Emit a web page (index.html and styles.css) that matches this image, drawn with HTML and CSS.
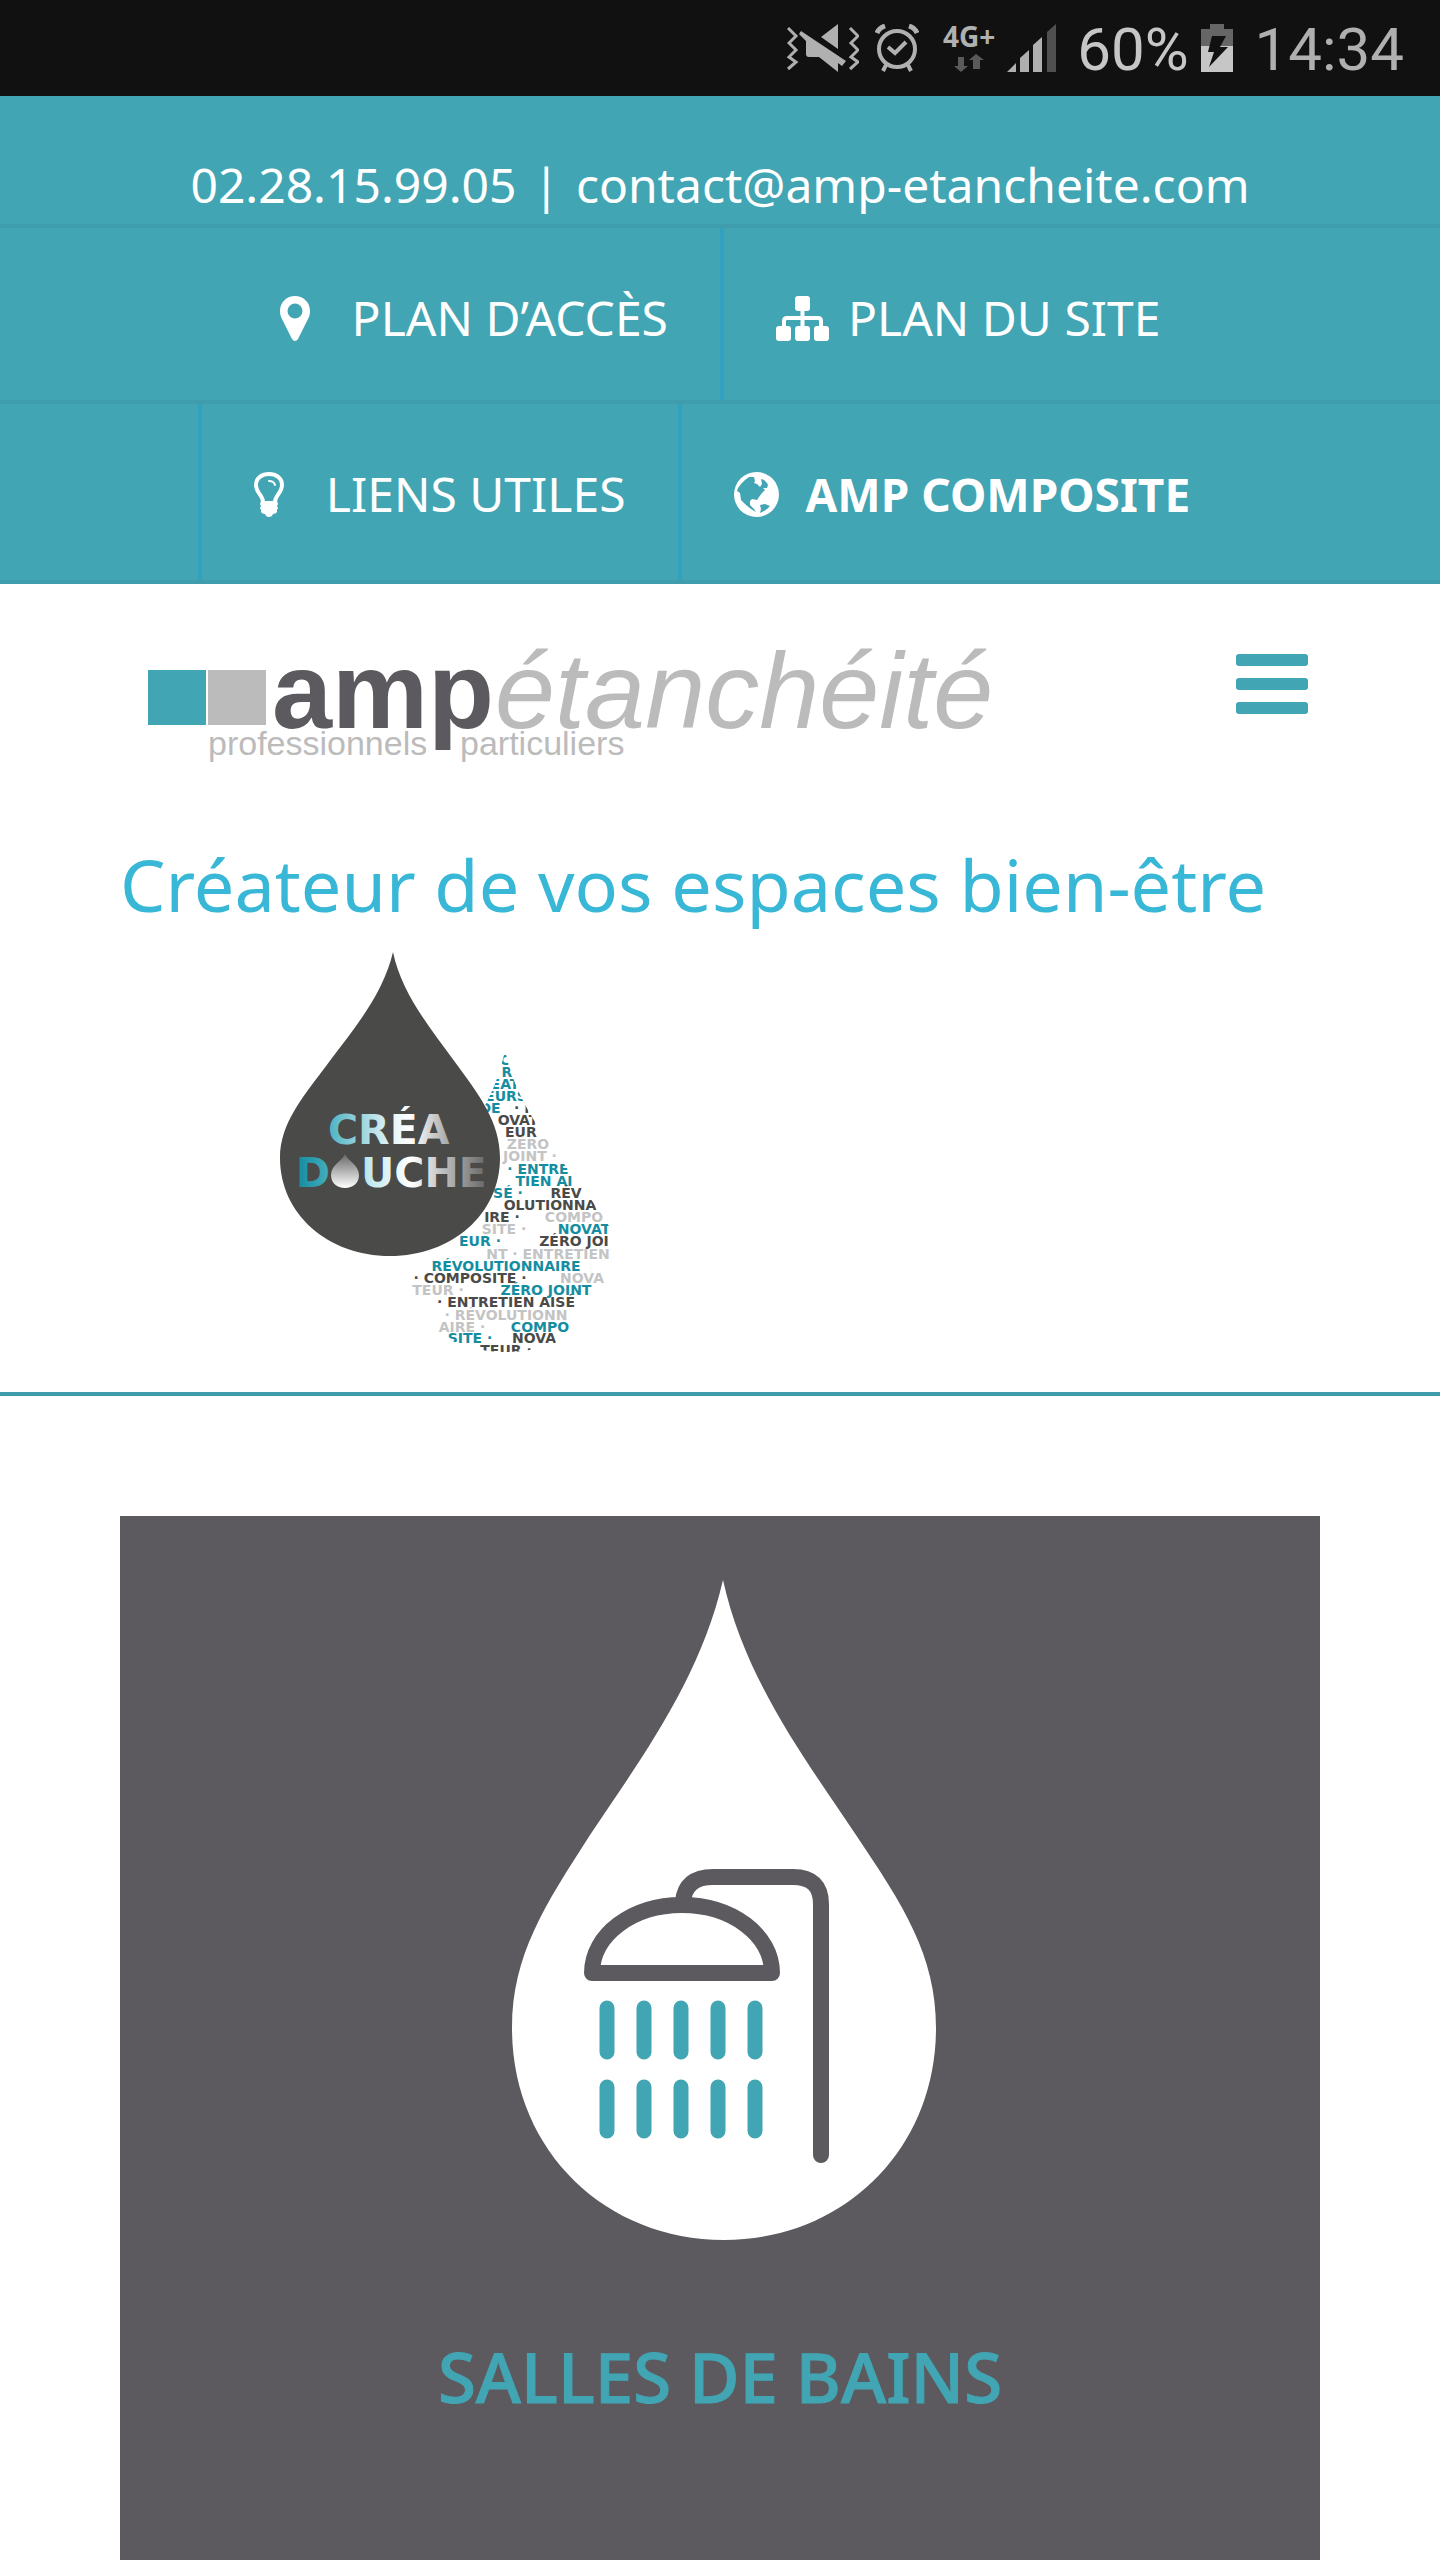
FILE: index.html
```html
<!DOCTYPE html>
<html lang="fr">
<head>
    <meta charset="UTF-8">
    <meta name="viewport" content="width=device-width, initial-scale=1.0">
    <title>AMP Étanchéité</title>
    <link rel="stylesheet" href="styles.css">
</head>
<body>
    <div class="status-bar">
        <svg class="status-mute" width="72" height="48" viewBox="0 0 72 48">
            <g fill="none" stroke="#b0b0b0" stroke-width="3">
                <path d="M1 4l8 8-7 7 7 7-7 7 7 5-8 7"/>
                <path d="M63 4l8 8-7 7 7 7-7 7 7 5-8 7"/>
            </g>
            <path fill="#b0b0b0" d="M51 0v25L34 13zM14 7l45 30-4 5-4-3v9L32 33H22q-3 0-3-3V17L12 10z"/>
        </svg>
        <svg class="status-alarm" width="44" height="48" viewBox="0 0 44 48">
            <g fill="none" stroke="#b0b0b0" stroke-width="4">
                <circle cx="22" cy="25" r="18"/>
                <path d="M13 23l7 6 11-11M11 41l-3 6M33 41l3 6"/>
                <path d="M2 9q2-5 8-7M42 9q-2-5-8-7" stroke-width="5"/>
            </g>
        </svg>
        <div class="network">
            <span>4G+</span>
            <svg width="30" height="18" viewBox="0 0 30 18">
                <path fill="#5a5a5a" d="M4 3h6v9h4l-7 6-7-6h4zM19 15h7V6h4l-8-6-7 6h4z"/>
            </svg>
        </div>
        <svg class="status-signal" width="50" height="48" viewBox="0 0 50 48">
            <path fill="#b0b0b0" d="M0 48l9-9v9zM13 34l9-8v22h-9zM26 21l9-8v35h-9z"/>
            <path fill="#505050" d="M40 8l9-8v48h-9z"/>
        </svg>
        <span class="status-text battery-level">60%</span>
        <svg class="status-battery" width="32" height="48" viewBox="0 0 32 48">
            <path fill="#666" d="M9 0h14v5h9v17H0V5h9z"/>
            <path fill="#c6c6c6" d="M0 22h32v26H0z"/>
            <path fill="#111" d="M11 12h14l-6 11h8L8 43l5-15H7z"/>
        </svg>
        <span class="status-text">14:34</span>
    </div>

    <div class="top-bar">
        <p class="contact">
            <a href="tel:0228159905">02.28.15.99.05</a>
            <span class="divider">|</span>
            <a href="mailto:contact@amp-etancheite.com">contact@amp-etancheite.com</a>
        </p>
        <nav class="top-nav">
            <ul class="nav-row">
                <li>
                    <a href="#">
                        <span class="nav-icon">
                            <svg width="30" height="45" viewBox="0 0 30 45">
                                <path fill="#fff" fill-rule="evenodd" d="M15 0C23 0 30 6 30 15c0 4-1 6-2 8L18 43q-3 4-6 0L2 23c-1-2-2-4-2-8C0 6 7 0 15 0zm0 7.500a7.500 7.500 0 1 0 0 15 7.500 7.500 0 0 0 0-15z"/>
                            </svg>
                        </span>PLAN D’ACCÈS</a>
                </li>
                <li>
                    <a href="#">
                        <span class="nav-icon">
                            <svg width="53" height="45" viewBox="0 0 53 45">
                                <g fill="#fff">
                                    <rect x="19" width="15" height="15" rx="3"/>
                                    <rect y="30" width="15" height="15" rx="3"/>
                                    <rect x="19" y="30" width="15" height="15" rx="3"/>
                                    <rect x="38" y="30" width="15" height="15" rx="3"/>
                                </g>
                                <path fill="none" stroke="#fff" stroke-width="4" d="M8 31v-6q0-3 3-3h31q3 0 3 3v6M26.500 14v17"/>
                            </svg>
                        </span>PLAN DU SITE</a>
                </li>
            </ul>
            <ul class="nav-row">
                <li class="first-link">
                    <a href="#">
                        <span class="nav-icon">
                            <svg width="30" height="45" viewBox="0 0 30 45">
                                <path fill="none" stroke="#fff" stroke-width="4" d="M9 30c0-7-7-9-7-17C2 6 8 2 15 2s13 4 13 11c0 8-7 10-7 17"/>
                                <path fill="none" stroke="#fff" stroke-width="2" stroke-linecap="round" d="M15 9q5 0 6 4"/>
                                <path fill="#fff" d="M7 29h16l1 3-1 2 1 2-1 2v2q-1 2-4 2-1 3-4 3t-4-3q-3 0-4-2v-2l-1-2 1-2-1-2z"/>
                            </svg>
                        </span>LIENS UTILES</a>
                </li>
                <li>
                    <a href="#" class="strong">
                        <span class="nav-icon">
                            <svg width="45" height="45" viewBox="0 0 45 45">
                                <circle cx="22.500" cy="22.500" r="22.500" fill="#fff"/>
                                <path fill="#42a5b3" d="M7 12l4-4 4-3h5l1 4-1 2 3 1 3 3 2-3-1-5 3 1 3 3 1 2-1 3h-4l2 2-3 3-3 4-2 3-5-1-2 2v4l4 4 2 3-5-3-5-4-5-5-1-7-3-2 1-3zM26 33l5-1 5 2-3 3-3 2-4 2 1-4z"/>
                            </svg>
                        </span>AMP COMPOSITE</a>
                </li>
            </ul>
        </nav>
    </div>

    <header class="header">
        <div class="header-top">
            <a href="#" class="logo" aria-label="amp étanchéité">
                <svg width="850" height="120" viewBox="0 0 850 120">
                    <rect y="22" width="58" height="55" fill="#42a5b3"/>
                    <rect x="60" y="22" width="58" height="55" fill="#bbb"/>
                    <g class="logo-text">
                        <text x="124" y="80" class="logo-amp">amp</text>
                        <text x="347" y="80" class="logo-name">étanchéité</text>
                        <text x="60" y="107" class="logo-small">professionnels</text>
                        <text x="312" y="107" class="logo-small">particuliers</text>
                    </g>
                </svg>
            </a>
            <button class="menu-btn" type="button" aria-label="Menu">
                <span></span>
                <span></span>
                <span></span>
            </button>
        </div>
        <h2 class="slogan">Créateur de vos espaces bien-être</h2>
        <svg class="crea-logo" width="337" height="400" viewBox="0 0 337 400">
            <defs>
                <clipPath id="words">
                    <path d="M225 98C236 150 265 185 290 220c28 38 46 55 46 80 0 60-46 100-110 100s-110-40-110-100c0-30 24-55 49-85 25-35 51-70 60-117z"/>
                </clipPath>
                <linearGradient id="crea" gradientUnits="userSpaceOnUse" x1="49" y1="0" x2="175" y2="0">
                    <stop offset="0" stop-color="#4fb3c2"/>
                    <stop offset=".5" stop-color="#e4f5f8"/>
                    <stop offset=".65" stop-color="#fff"/>
                    <stop offset="1" stop-color="#999"/>
                </linearGradient>
                <linearGradient id="douche" gradientUnits="userSpaceOnUse" x1="17" y1="0" x2="207" y2="0">
                    <stop offset="0" stop-color="#128da0"/>
                    <stop offset=".16" stop-color="#43acbb"/>
                    <stop offset=".38" stop-color="#c2e9f0"/>
                    <stop offset=".6" stop-color="#fff"/>
                    <stop offset="1" stop-color="#666"/>
                </linearGradient>
                <linearGradient id="silver" x1="0" y1="0" x2="0" y2="1">
                    <stop offset="0" stop-color="#666"/>
                    <stop offset="1" stop-color="#fff"/>
                </linearGradient>
            </defs>
            <g class="words" clip-path="url(#words)">
                <text class="teal" x="225" y="113">C</text>
                <text class="teal" x="227" y="125">R</text>
                <text class="teal" x="225" y="137">ÉAT</text>
                <text class="teal" x="226" y="149">EURS</text>
                <text class="teal" x="210" y="161">DE</text>
                <text class="dark" x="245" y="161">· N</text>
                <text class="dark" x="238" y="173">OVAT</text>
                <text class="dark" x="246" y="185">EUR ·</text>
                <text class="pale" x="248" y="197">ZÉRO</text>
                <text class="pale" x="250" y="209">JOINT ·</text>
                <text class="teal" x="258" y="222">· ENTRE</text>
                <text class="teal" x="264" y="234">TIEN AI</text>
                <text class="teal" x="228" y="246">SÉ ·</text>
                <text class="dark" x="286" y="246">RÉV</text>
                <text class="dark" x="270" y="258">OLUTIONNA</text>
                <text class="dark" x="222" y="270">IRE ·</text>
                <text class="pale" x="294" y="270">COMPO</text>
                <text class="pale" x="224" y="282">SITE ·</text>
                <text class="teal" x="304" y="282">NOVAT</text>
                <text class="teal" x="200" y="294">EUR ·</text>
                <text class="dark" x="294" y="294">ZÉRO JOI</text>
                <text class="pale" x="268" y="307">NT · ENTRETIEN</text>
                <text class="teal" x="226" y="319">RÉVOLUTIONNAIRE</text>
                <text class="dark" x="190" y="331">· COMPOSITE ·</text>
                <text class="pale" x="302" y="331">NOVA</text>
                <text class="pale" x="158" y="343">TEUR ·</text>
                <text class="teal" x="266" y="343">ZÉRO JOINT</text>
                <text class="dark" x="226" y="355">· ENTRETIEN AISÉ</text>
                <text class="pale" x="226" y="368">· RÉVOLUTIONN</text>
                <text class="pale" x="182" y="380">AIRE ·</text>
                <text class="teal" x="260" y="380">COMPO</text>
                <text class="teal" x="190" y="391">SITE ·</text>
                <text class="dark" x="254" y="391">NOVA</text>
                <text class="dark" x="226" y="403">TEUR ·</text>
            </g>
            <path fill="#4a4a48" d="M113 0C104 40 75 76 52 106 24 144 0 170 0 206c0 56 48 98 110 98s110-42 110-98c0-36-20-62-48-100C150 76 121 40 113 0z"/>
            <g class="crea-text">
                <text x="48" y="192" fill="url(#crea)">CRÉA</text>
                <text x="16" y="235" fill="url(#douche)">D</text>
                <text x="81" y="235" fill="url(#douche)">UCHE</text>
            </g>
            <path fill="url(#silver)" d="M65 202c2 6 14 11 14 21 0 8-6 13-14 13s-14-5-14-13c0-10 12-15 14-21z"/>
        </svg>
    </header>

    <main class="content">
        <a href="#" class="card">
            <svg width="424" height="660" viewBox="0 0 424 660">
                <path fill="#fff" d="M211 0C188 100 128 180 78 255 33 325 0 375 0 448c0 122 93 212 212 212s212-90 212-212c0-73-33-123-80-193C294 180 233 100 211 0z"/>
                <g fill="none" stroke="#5c5a5f" stroke-width="16" stroke-linecap="round" stroke-linejoin="round">
                    <path d="M171 322q2-25 30-25h80q28 0 28 27v251"/>
                    <path d="M80 393c0-38 40-68 90-68s90 30 90 68z"/>
                </g>
                <path stroke="#42a5b3" stroke-width="15" stroke-linecap="round" d="M95 428v44M132 428v44M169 428v44M206 428v44M243 428v44M95 507v44M132 507v44M169 507v44M206 507v44M243 507v44"/>
            </svg>
            <h3>SALLES DE BAINS</h3>
        </a>
    </main>
</body>
</html>
```

FILE: styles.css
```css
* {
    box-sizing: border-box;
}

body {
    margin: 0;
    min-height: 100vh;
    display: flex;
    flex-direction: column;
    background: #fff;
    font-family: "Noto Sans", sans-serif;
}

a {
    color: inherit;
    text-decoration: none;
}

svg {
    display: block;
    flex-shrink: 0;
}

/* Status bar */
.status-bar {
    display: flex;
    align-items: center;
    justify-content: flex-end;
    gap: 16px;
    height: 96px;
    padding-right: 36px;
    background: #111;
    color: #b0b0b0;
}

.network {
    display: flex;
    flex-direction: column;
    align-items: center;
    gap: 6px;
    margin: 0 -4px 0 8px;
    font-size: 28px;
    font-weight: bold;
    line-height: 24px;
}

.status-text {
    padding-top: 4px;
    font-family: Roboto, sans-serif;
    font-size: 60px;
    line-height: 96px;
}

.battery-level {
    color: #c6c6c6;
    margin: 0 -4px 0 4px;
}

.status-battery {
    margin-right: 6px;
}

/* Top bar */
.top-bar {
    background: #42a5b3;
    color: #fff;
    font-size: 48px;
}

.contact {
    margin: 0;
    padding: 56px 0 6px;
    border-bottom: 4px solid #3f9cab;
    line-height: 66px;
    text-align: center;
}

.divider {
    margin: 0 4px;
}

.nav-row {
    display: flex;
    justify-content: center;
    margin: 0;
    padding: 0;
    border-bottom: 4px solid #3f9cab;
    list-style: none;
}

.nav-row li {
    border-right: 4px solid #32a1bf;
}

.nav-row li:last-child {
    border-right: 0;
}

.nav-row .first-link {
    border-left: 4px solid #32a1bf;
}

.nav-row a {
    display: flex;
    align-items: center;
    padding: 8px 52px 0;
    line-height: 164px;
}

.nav-row:last-child a {
    padding-bottom: 4px;
}

.nav-icon {
    width: 72px;
}

.strong {
    font-size: 46px;
    font-weight: bold;
}

/* Header */
.header {
    padding: 64px 120px 40px;
    border-bottom: 4px solid #3f9cab;
}

.header-top {
    display: flex;
    justify-content: space-between;
    align-items: flex-start;
    padding: 0 12px 0 28px;
}

.logo svg {
    overflow: visible;
}

.logo-text {
    font-family: "Liberation Sans", Arial, sans-serif;
    fill: #bbb;
}

.logo-amp {
    font-size: 108px;
    font-weight: bold;
    fill: #5c5a5f;
}

.logo-name {
    font-size: 108px;
    font-style: italic;
}

.logo-small {
    font-size: 34px;
}

.menu-btn {
    display: flex;
    flex-direction: column;
    gap: 12px;
    width: 72px;
    margin-top: 6px;
    padding: 0;
    border: 0;
    background: none;
}

.menu-btn span {
    height: 12px;
    border-radius: 3px;
    background: #42a5b3;
}

.slogan {
    margin: 64px 0 16px;
    color: #38b8d6;
    font-size: 72px;
    font-weight: normal;
    line-height: 104px;
}

.crea-logo {
    margin-left: 160px;
}

.crea-text {
    font-family: "DejaVu Sans", sans-serif;
    font-size: 41px;
    font-weight: bold;
}

.words {
    font-family: "DejaVu Sans", sans-serif;
    font-size: 14px;
    font-weight: bold;
    text-anchor: middle;
}

.teal {
    fill: #158da0;
}

.dark {
    fill: #4a4a48;
}

.pale {
    fill: #c4c4c4;
}

/* Cards */
.content {
    flex: 1;
    display: flex;
    padding: 120px 120px 0;
}

.card {
    flex: 1;
    display: flex;
    flex-direction: column;
    align-items: center;
    padding: 64px 0 96px;
    background: #5c5a5f;
}

.card svg {
    margin-left: 8px;
}

.card h3 {
    margin: 84px 0 0;
    color: #42a5b3;
    font-size: 69px;
    font-weight: 500;
    line-height: 104px;
    -webkit-text-stroke: 1px #42a5b3;
}
```
